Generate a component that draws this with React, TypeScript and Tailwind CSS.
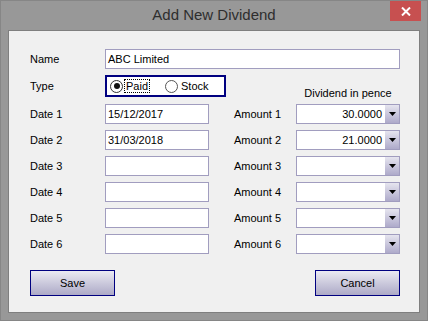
import React from "react";

const inputCls =
  "h-[20px] w-[104px] bg-white border border-[#a19dbf] box-border";

function DropBox({ value }: { value?: string }) {
  return (
    <div className="flex h-[20px] w-[104px] bg-white border border-[#a19dbf] box-border">
      <div className="flex-1 flex items-center justify-end pr-[3px] text-black">{value}</div>
      <div className="w-[14px] h-full flex items-center justify-center bg-gradient-to-b from-[#e6e5ef] to-[#aeaaca]">
        <svg width="7" height="4" viewBox="0 0 7 4">
          <polygon points="0,0 7,0 3.5,4" fill="#000" />
        </svg>
      </div>
    </div>
  );
}

function Row({ date, amount, n, first }: { date?: string; amount?: string; n: number; first?: boolean }) {
  return (
    <div className={`flex items-center h-[20px] ${first ? "mt-[7px]" : "mt-[6px]"}`}>
      <div className="w-[75px]">Date {n}</div>
      <div className={`${inputCls} flex items-center pl-[2px]`}>{date}</div>
      <div className="w-[25px]" />
      <div className="w-[62px]">Amount {n}</div>
      <DropBox value={amount} />
    </div>
  );
}

export default function App() {
  return (
    <div
      className="w-[428px] h-[321px] bg-[#989898] border border-[#868686] flex flex-col px-[7px] pb-[7px] box-border"
      style={{ fontFamily: '"Liberation Sans", Arial, sans-serif' }}
    >
      <div className="relative h-[29px] flex items-center justify-center shrink-0">
        <span className="text-[15px] text-[#2e2e2e] -mt-[1px]">Add New Dividend</span>
        <div className="absolute right-[-1px] top-0 w-[31px] h-[20px] bg-[#c75050] flex items-center justify-center">
          <svg width="10" height="9" viewBox="0 0 10 9">
            <path d="M1 0.5 L9 8.5 M9 0.5 L1 8.5" stroke="#fff" strokeWidth="2" />
          </svg>
        </div>
      </div>
      <div className="flex-1 bg-[#f0f0f0] border border-[#7f7f7f] box-border text-[11px] text-black">
        <div className="flex flex-col pl-[21px] pt-[18px]">
          <div className="flex items-center h-[20px]">
            <div className="w-[75px]">Name</div>
            <div className="h-[20px] w-[295px] bg-white border border-[#a19dbf] box-border flex items-center pl-[2px]">
              ABC Limited
            </div>
          </div>
          <div className="flex h-[22px] mt-[6px]">
            <div className="w-[75px] flex items-center">Type</div>
            <div className="w-[121px] h-[22px] border-2 border-[#000080] box-border bg-white flex items-center pl-[3px]">
              <div className="w-[13px] h-[13px] rounded-full border border-[#333] bg-white flex items-center justify-center box-border">
                <div className="w-[6px] h-[6px] rounded-full bg-[#111]" />
              </div>
              <div className="ml-[1px] px-[1px] border border-dotted border-black leading-[12px]">Paid</div>
              <div className="w-[15px]" />
              <div className="w-[13px] h-[13px] rounded-full border border-[#555] bg-white box-border" />
              <div className="ml-[3px]">Stock</div>
            </div>
            <div className="w-[70px]" />
            <div className="w-[104px] flex items-end justify-center leading-[13px] mb-[-3px]">Dividend in pence</div>
          </div>
          <Row n={1} date="15/12/2017" amount="30.0000" first />
          <Row n={2} date="31/03/2018" amount="21.0000" />
          <Row n={3} />
          <Row n={4} />
          <Row n={5} />
          <Row n={6} />
          <div className="flex mt-[16px] h-[26px]">
            <button className="w-[85px] h-[26px] border border-[#000080] bg-gradient-to-b from-[#ebeaf2] to-[#adaac7] text-[11px] text-black">
              Save
            </button>
            <div className="w-[200px]" />
            <button className="w-[85px] h-[26px] border border-[#000080] bg-gradient-to-b from-[#ebeaf2] to-[#adaac7] text-[11px] text-black">
              Cancel
            </button>
          </div>
        </div>
      </div>
    </div>
  );
}
